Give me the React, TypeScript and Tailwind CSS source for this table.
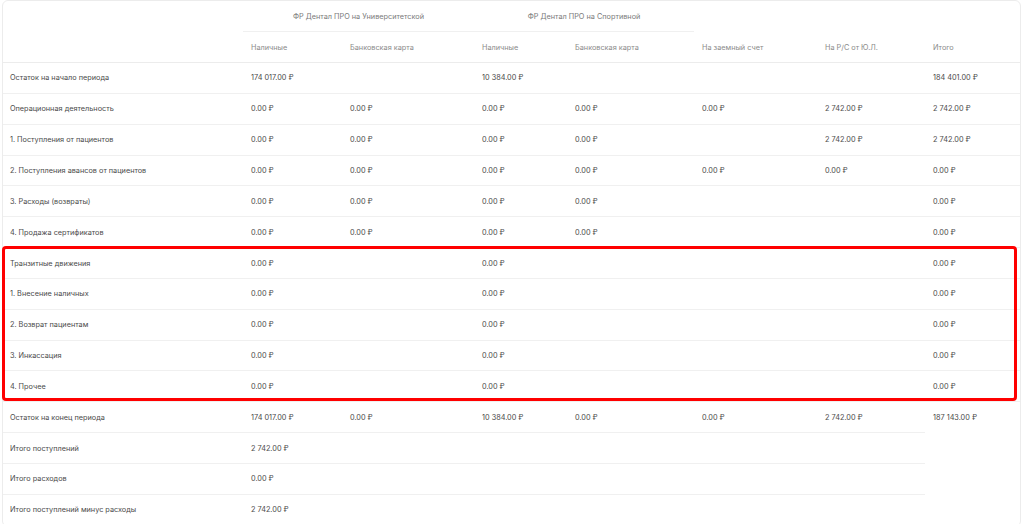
import React from "react";

type Row = { label: string; cells: string[]; noTotal?: boolean; noTotalBorder?: boolean };

const Z = "0.00 ₽";
const rows: Row[] = [
  { label: "Остаток на начало периода", cells: ["174 017.00 ₽", "", "10 384.00 ₽", "", "", "", "184 401.00 ₽"] },
  { label: "Операционная деятельность", cells: [Z, Z, Z, Z, Z, "2 742.00 ₽", "2 742.00 ₽"] },
  { label: "1. Поступления от пациентов", cells: [Z, Z, Z, Z, "", "2 742.00 ₽", "2 742.00 ₽"] },
  { label: "2. Поступления авансов от пациентов", cells: [Z, Z, Z, Z, Z, Z, Z] },
  { label: "3. Расходы (возвраты)", cells: [Z, Z, Z, Z, "", "", Z] },
  { label: "4. Продажа сертификатов", cells: [Z, Z, Z, Z, "", "", Z] },
  { label: "Транзитные движения", cells: [Z, "", Z, "", "", "", Z] },
  { label: "1. Внесение наличных", cells: [Z, "", Z, "", "", "", Z] },
  { label: "2. Возврат пациентам", cells: [Z, "", Z, "", "", "", Z] },
  { label: "3. Инкассация", cells: [Z, "", Z, "", "", "", Z] },
  { label: "4. Прочее", cells: [Z, "", Z, "", "", "", Z] },
  { label: "Остаток на конец периода", cells: ["174 017.00 ₽", Z, "10 384.00 ₽", Z, Z, "2 742.00 ₽", "187 143.00 ₽"], noTotalBorder: true },
  { label: "Итого поступлений", cells: ["2 742.00 ₽", "", "", "", "", ""], noTotal: true },
  { label: "Итого расходов", cells: [Z, "", "", "", "", ""], noTotal: true },
  { label: "Итого поступлений минус расходы", cells: ["2 742.00 ₽", "", "", "", "", ""], noTotal: true },
];

export default function App() {
  return (
    <div className="relative h-[524px] w-[1024px] overflow-hidden bg-white" style={{ fontFamily: "Inter, 'Noto Sans', sans-serif" }}>
      <div className="ml-[2px] w-[1019px] rounded-md border border-[#ececec] bg-white">
        <table className="w-full table-fixed border-separate border-spacing-0 text-[7.3px] text-[#4a4a4a]">
          <colgroup>
            <col className="w-[240px]" />
            <col className="w-[99px]" />
            <col className="w-[132px]" />
            <col className="w-[93px]" />
            <col className="w-[127px]" />
            <col className="w-[123px]" />
            <col className="w-[108px]" />
            <col />
          </colgroup>
          <thead>
            <tr>
              <th className="h-[31px]" />
              <th colSpan={2} className="h-[31px] border-b border-[#f0f0f0] pt-[2px] text-center font-normal text-[#7a7a7a]">
                ФР Дентал ПРО на Университетской
              </th>
              <th colSpan={2} className="h-[31px] border-b border-[#f0f0f0] pt-[2px] text-center font-normal text-[#7a7a7a]">
                ФР Дентал ПРО на Спортивной
              </th>
              <th />
              <th />
              <th />
            </tr>
            <tr>
              <th className="h-[31px] border-b border-[#ececec]" />
              {["Наличные", "Банковская карта", "Наличные", "Банковская карта", "На заемный счет", "На Р/С от Ю.Л.", "Итого"].map((h, i) => (
                <th key={i} className="h-[31px] border-b border-[#ececec] pl-2 pt-[2px] text-left font-normal text-[#8a8a8a]">
                  {h}
                </th>
              ))}
            </tr>
          </thead>
          <tbody>
            {rows.map((r, ri) => (
              <tr key={ri}>
                <td className="h-[30.85px] border-b border-[#f0f0f0] pl-[7px] pt-[2px]">{r.label}</td>
                {r.cells.map((c, ci) => {
                  const isTotal = ci === 6;
                  const noBorder = isTotal && r.noTotalBorder;
                  return (
                    <td
                      key={ci}
                      className={
                        noBorder
                          ? "h-[30.85px] pl-2 pt-[2px]"
                          : "h-[30.85px] border-b border-[#f0f0f0] pl-2 pt-[2px]"
                      }
                    >
                      {c}
                    </td>
                  );
                })}
                {r.noTotal && <td className="h-[30.85px]" />}
              </tr>
            ))}
          </tbody>
        </table>
      </div>
      <div className="pointer-events-none absolute left-[2px] top-[246px] h-[155px] w-[1015px] rounded-[4px] border-[3px] border-[#ff0000]" />
    </div>
  );
}
